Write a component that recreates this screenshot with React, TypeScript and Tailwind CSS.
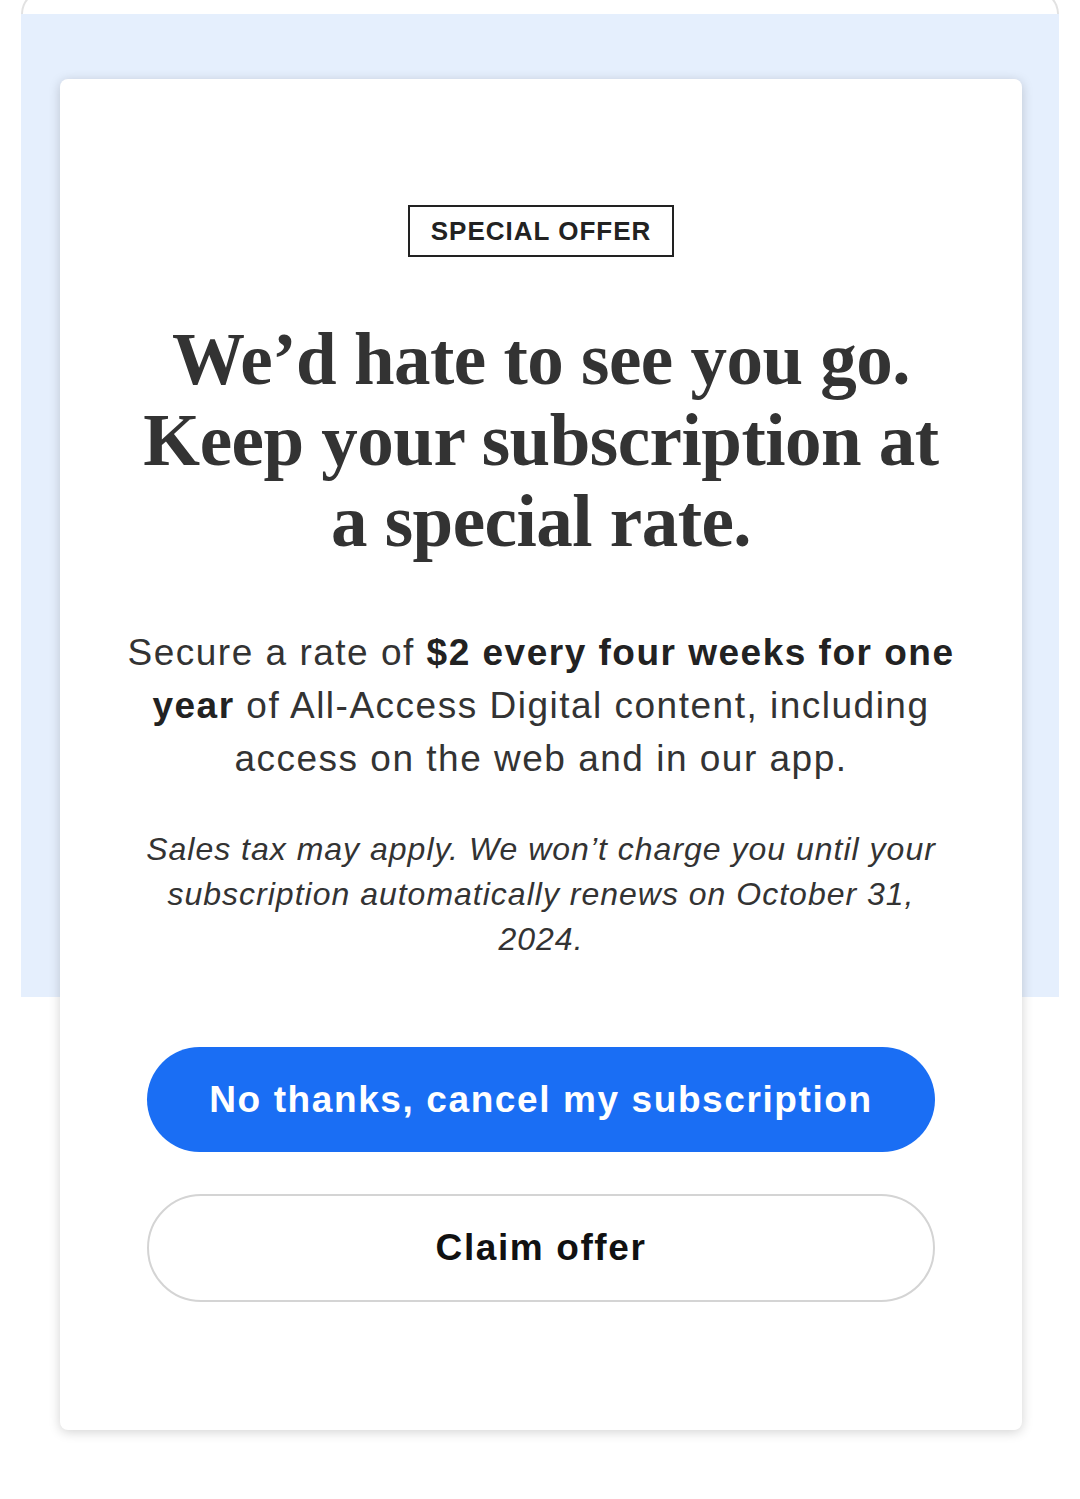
export default function App() {
  return (
    <div className="min-h-[1499px] bg-white font-['Liberation_Sans',Arial,sans-serif] text-[#333]">
      <div className="px-[21px]">
        <div className="mt-[-10px] h-[24px] rounded-t-[26px] border-2 border-b-0 border-[#e2e2e2]" />
        <div className="h-[983px] bg-[#e5effd] pl-[39px] pr-[37px] pt-[65px]">
          <div className="relative flex h-[1351px] flex-col items-center rounded-[8px] bg-white px-[60px] pt-[126px] shadow-[0_2px_12px_rgba(0,0,0,0.18)]">
            <div className="border-2 border-[#222] px-[21px] py-[8px] text-[26px] font-bold leading-[32px] tracking-[1px] text-[#222]">
              SPECIAL OFFER
            </div>
            <h1 className="mt-[62px] text-center font-['Liberation_Serif',Georgia,serif] text-[73px] font-bold leading-[81px] tracking-[-0.5px] text-[#333]">
              We’d hate to see you go.
              <br />
              Keep your subscription at
              <br />
              a special rate.
            </h1>
            <p className="mt-[64px] text-center text-[37px] leading-[53px] tracking-[1.5px] text-[#333]">
              Secure a rate of <b className="text-[#222]">$2 every four weeks for one</b>
              <br />
              <b className="text-[#222]">year</b> of All-Access Digital content, including
              <br />
              access on the web and in our app.
            </p>
            <p className="mt-[42px] text-center text-[32px] italic leading-[45px] tracking-[1px] text-[#333]">
              Sales tax may apply. We won’t charge you until your
              <br />
              subscription automatically renews on October 31,
              <br />
              2024.
            </p>
            <div className="mt-[85px] flex w-[788px] flex-col gap-[42px]">
              <button className="flex h-[105px] items-center justify-center rounded-full bg-[#1a6ef4] text-[37px] font-bold tracking-[1.6px] text-white">
                No thanks, cancel my subscription
              </button>
              <button className="flex h-[108px] items-center justify-center rounded-full border-2 border-[#d4d4d4] bg-white text-[37px] font-bold tracking-[1.6px] text-[#111]">
                Claim offer
              </button>
            </div>
          </div>
        </div>
      </div>
    </div>
  );
}
